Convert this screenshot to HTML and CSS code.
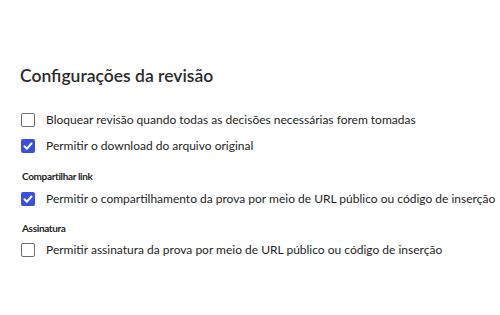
FILE: index.html
```html
<!DOCTYPE html>
<html>
<head>
<meta name="viewport" content="width=device-width, initial-scale=1">
<link rel="stylesheet" href="styles.css">
</head>
<body>

<div class="panel">
<h2 class="title">Configurações da revisão</h2>

<div class="group">
<label class="opt"><span class="box"></span>Bloquear revisão quando todas as decisões necessárias forem tomadas</label>
<label class="opt"><span class="box on"><svg viewBox="0 0 14 14"><path d="M3.5 7.3l2.4 2.4 4.6-5.2" fill="none" stroke="white" stroke-width="2" stroke-linecap="round" stroke-linejoin="round"/></svg></span>Permitir o download do arquivo original</label>
</div>

<h4 class="sub">Compartilhar link</h4>
<div class="group">
<label class="opt"><span class="box on"><svg viewBox="0 0 14 14"><path d="M3.5 7.3l2.4 2.4 4.6-5.2" fill="none" stroke="white" stroke-width="2" stroke-linecap="round" stroke-linejoin="round"/></svg></span>Permitir o compartilhamento da prova por meio de URL público ou código de inserção</label>
</div>

<h4 class="sub last">Assinatura</h4>
<div class="group">
<label class="opt"><span class="box"></span>Permitir assinatura da prova por meio de URL público ou código de inserção</label>
</div>
</div>

</body>
</html>
```

FILE: styles.css
```css
body{margin:0;background-color:#ffffff;font-family:Lato,"Noto Sans",sans-serif;color:#2c2c2c;}
.panel{padding:65px 0 0 21px;}
.title{margin:0 0 26px -1px;font-size:17.5px;line-height:22px;font-weight:600;color:#2c2c2c;white-space:nowrap;}
.group{display:flex;flex-direction:column;gap:12px;}
.opt{display:flex;align-items:center;gap:11px;font-size:12px;line-height:14px;white-space:nowrap;color:#262626;}
.box{display:flex;width:12px;height:12px;border:1px solid #6e6e6e;border-radius:2px;flex:none;}
.box.on{width:14px;height:14px;border:none;background-color:#3b4fe0;}
.box svg{width:14px;height:14px;}
.sub{margin:17px 0 10px 1px;font-size:10px;line-height:12px;font-weight:700;letter-spacing:-0.35px;color:#262626;}
.sub.last{margin:16px 0 9px 1px;}
```
